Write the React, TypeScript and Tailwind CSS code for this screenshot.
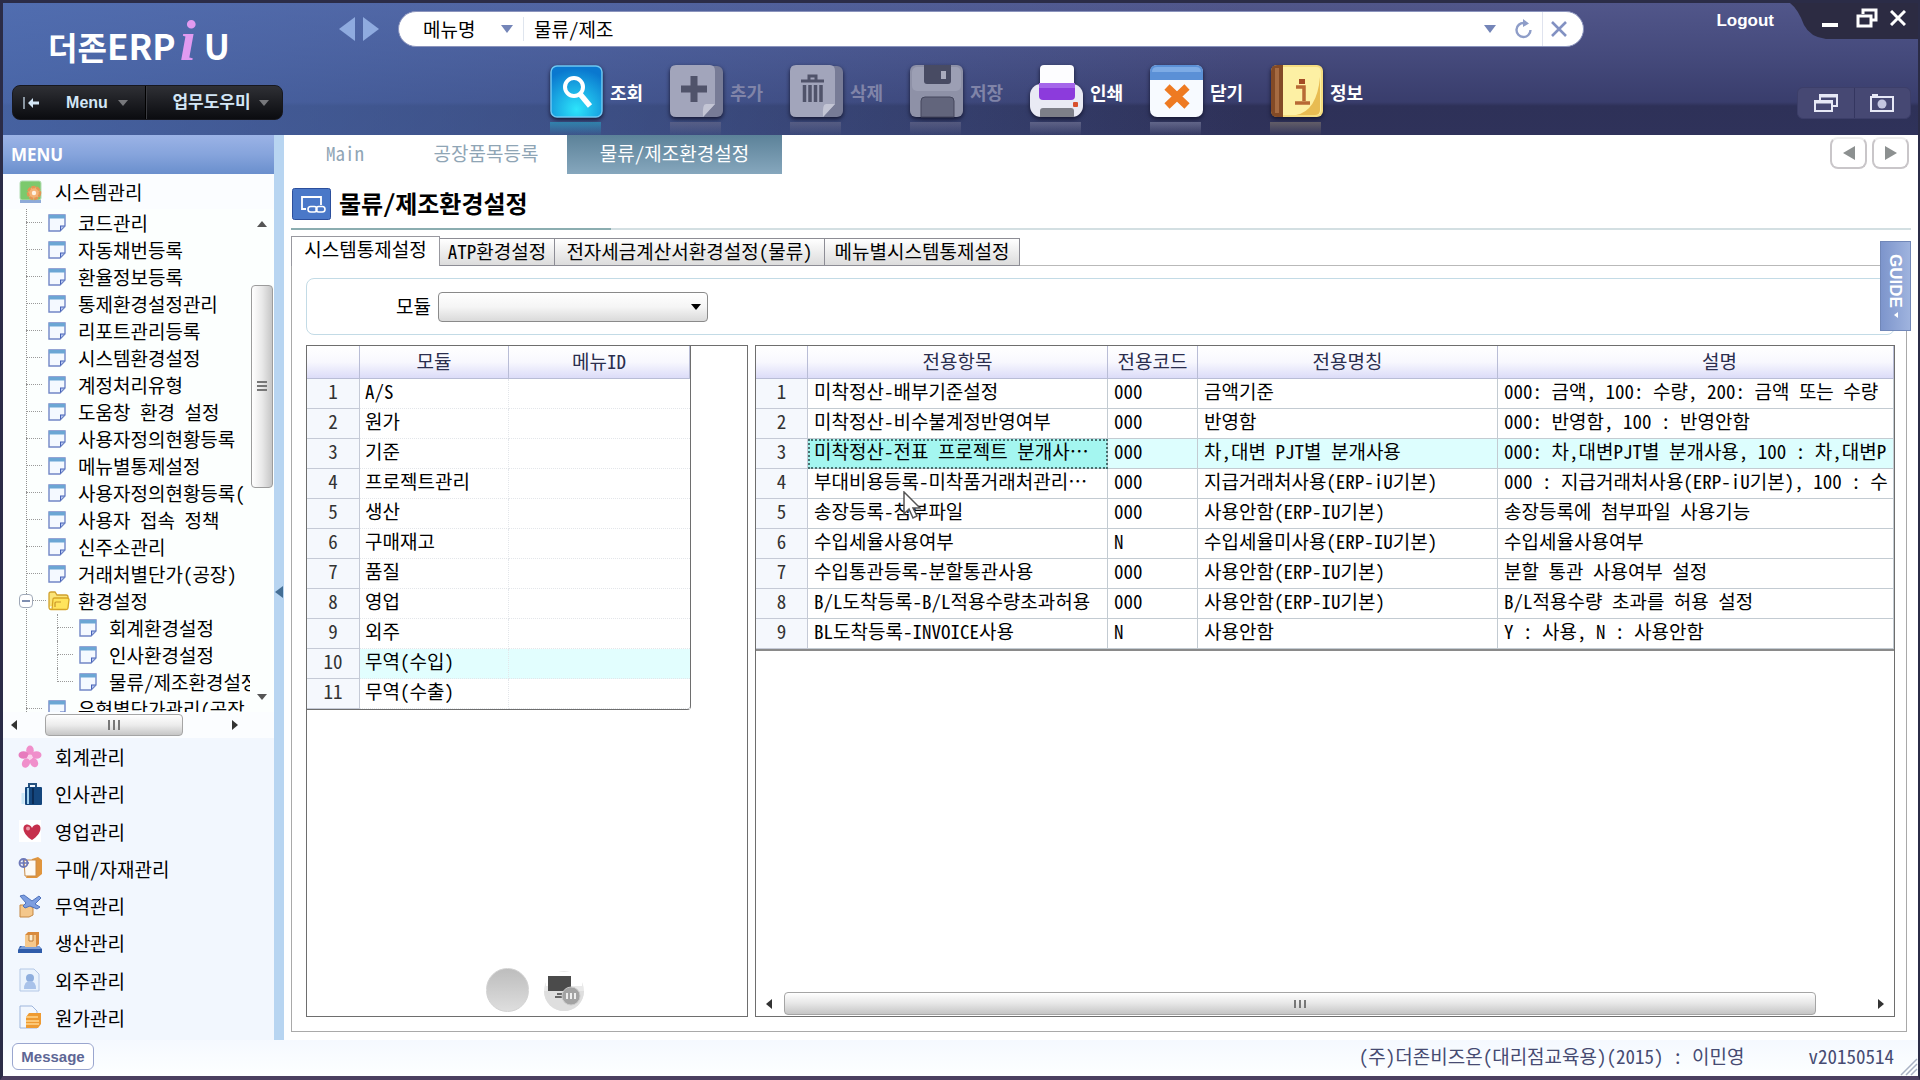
import type { ReactNode } from 'react'

const MONO = "font-['Noto_Sans_Mono_CJK_KR','Noto_Sans_CJK_KR',monospace]"
const SANS = "font-['Liberation_Sans','Noto_Sans_CJK_KR',sans-serif]"

interface TreeItem {
  label: string
  depth?: number
  folder?: boolean
}

const treeItems: TreeItem[] = [
  { label: '코드관리' },
  { label: '자동채번등록' },
  { label: '환율정보등록' },
  { label: '통제환경설정관리' },
  { label: '리포트관리등록' },
  { label: '시스템환경설정' },
  { label: '계정처리유형' },
  { label: '도움창 환경 설정' },
  { label: '사용자정의현황등록' },
  { label: '메뉴별통제설정' },
  { label: '사용자정의현황등록(' },
  { label: '사용자 접속 정책' },
  { label: '신주소관리' },
  { label: '거래처별단가(공장)' },
  { label: '환경설정', folder: true },
  { label: '회계환경설정', depth: 1 },
  { label: '인사환경설정', depth: 1 },
  { label: '물류/제조환경설정', depth: 1 },
  { label: '유형별단가관리(공장' },
]

const modules = ['A/S', '원가', '기준', '프로젝트관리', '생산', '구매재고', '품질', '영업', '외주', '무역(수입)', '무역(수출)']

// 전용항목, 전용코드, 전용명칭, 설명
const settings = [
  ['미착정산-배부기준설정', '000', '금액기준', '000: 금액, 100: 수량, 200: 금액 또는 수량'],
  ['미착정산-비수불계정반영여부', '000', '반영함', '000: 반영함, 100 : 반영안함'],
  ['미착정산-전표 프로젝트 분개사…', '000', '차,대변 PJT별 분개사용', '000: 차,대변PJT별 분개사용, 100 : 차,대변P'],
  ['부대비용등록-미착품거래처관리…', '000', '지급거래처사용(ERP-iU기본)', '000 : 지급거래처사용(ERP-iU기본), 100 : 수'],
  ['송장등록-첨부파일', '000', '사용안함(ERP-IU기본)', '송장등록에 첨부파일 사용기능'],
  ['수입세율사용여부', 'N', '수입세율미사용(ERP-IU기본)', '수입세율사용여부'],
  ['수입통관등록-분할통관사용', '000', '사용안함(ERP-IU기본)', '분할 통관 사용여부 설정'],
  ['B/L도착등록-B/L적용수량초과허용', '000', '사용안함(ERP-IU기본)', 'B/L적용수량 초과를 허용 설정'],
  ['BL도착등록-INVOICE사용', 'N', '사용안함', 'Y : 사용, N : 사용안함'],
]

function Arrow({ dir, className }: { dir: 'left' | 'right' | 'up' | 'down'; className: string }) {
  const points = {
    left: '10,0 10,10 0,5',
    right: '0,0 10,5 0,10',
    up: '0,10 5,0 10,10',
    down: '0,0 10,0 5,10',
  }[dir]
  return (
    <svg viewBox="0 0 10 10" preserveAspectRatio="none" className={`shrink-0 fill-current ${className}`}>
      <polygon points={points} />
    </svg>
  )
}

function DocIcon() {
  return (
    <svg viewBox="0 0 18 18" className="w-[18px] h-[18px] shrink-0">
      <path d="M1 1h16v11l-5 5H1z" fill="#f4f9ff" stroke="#7187c6" strokeWidth="1.4" />
      <path d="M1 1h16v3.5H1z" fill="#6ba6d4" />
      <path d="M17 11.5h-5V17z" fill="#4763b8" />
      <path d="M13 12.5h3l-3 3z" fill="#b9c9ef" />
    </svg>
  )
}

function FolderIcon() {
  return (
    <svg viewBox="0 0 22 20" className="w-[22px] h-5 shrink-0">
      <path d="M1 16V3q0-2 2-2h4l2 3h9q2 0 2 2v3" fill="#fbe476" stroke="#d0a02c" strokeWidth="1.3" />
      <path d="M4 18.500 5 8q0-1 1.500-1H19q2 0 2 1.500l-1 8.500q0 1.500-2 1.500H3Q1 18.500 1 16" fill="#ffe45c" stroke="#d6a526" strokeWidth="1.3" />
      <path d="M7 16v-4q0-1 1-1h5" fill="none" stroke="#c9952a" strokeWidth="1.2" />
    </svg>
  )
}

const categories: { label: string; icon: ReactNode }[] = [
  {
    label: '회계관리',
    icon: (
      <g fill="#f08fcb">
        <ellipse cx="12" cy="5.500" rx="3.800" ry="5" />
        <ellipse cx="18.500" cy="10" rx="5" ry="3.800" />
        <ellipse cx="16" cy="17.500" rx="3.800" ry="5" transform="rotate(-35 16 17.500)" />
        <ellipse cx="8" cy="18" rx="3.800" ry="5" transform="rotate(30 8 18)" />
        <ellipse cx="5.500" cy="10" rx="5" ry="3.800" fill="#e77bbd" />
        <circle cx="12" cy="12" r="2.500" fill="#fbd3ec" />
      </g>
    ),
  },
  {
    label: '인사관리',
    icon: (
      <g>
        <path d="M11 5V2h7v3" fill="none" stroke="#27527f" strokeWidth="2" />
        <rect x="7" y="5" width="17" height="18" rx="1" fill="#14467d" />
        <path d="M10 6v16" stroke="#9fd0ee" strokeWidth="2" />
        <path d="M15 6v16" stroke="#0b2c56" strokeWidth="2" />
        <path d="M5 11v11" stroke="#cbe8f8" strokeWidth="3" />
      </g>
    ),
  },
  {
    label: '영업관리',
    icon: (
      <g>
        <rect x="1" y="1" width="22" height="22" fill="#fff" />
        <path d="M14 21C3 14 4 5 9.500 5.500Q13 6 14 9q1-3 4.500-3.500C24 5 25 14 14 21z" fill="#c52f4b" />
        <circle cx="10" cy="9.500" r="2" fill="#ec94a3" />
      </g>
    ),
  },
  {
    label: '구매/자재관리',
    icon: (
      <g>
        <path d="M14 3l6-2 4 3v14l-5 4H8z" fill="#e0953d" />
        <path d="M6 4h12v16H7z" fill="#fdfaf4" stroke="#c98c48" />
        <circle cx="5.500" cy="7" r="4" fill="none" stroke="#6d78b8" strokeWidth="1.800" />
        <path d="M2 7h9M5.500 3v8" stroke="#6d78b8" strokeWidth="1.500" />
      </g>
    ),
  },
  {
    label: '무역관리',
    icon: (
      <g>
        <path d="M2 11h9l4 3v7l-4 2H2z" fill="#f4c78b" stroke="#c48743" />
        <path d="M2 2l4-1 8 6 7-5 2 2-6 6 5 3-3 2-7-3-5 2-2-2 3-3z" fill="#7d9ee0" stroke="#4f73bd" />
      </g>
    ),
  },
  {
    label: '생산관리',
    icon: (
      <g>
        <path d="M2 15h19l3 3v4H0v-3z" fill="#2f5caa" />
        <path d="M4 15h17l2 3H1z" fill="#7c9fd8" />
        <path d="M7 4l3-3h11v12l-3 3H7z" fill="#d98b3d" />
        <path d="M7 4h11v12H7z" fill="#f6c98c" />
        <path d="M11 4v6h4V4" fill="#fdf0d5" stroke="#bc7a34" />
      </g>
    ),
  },
  {
    label: '외주관리',
    icon: (
      <g>
        <path d="M2 1h14l5 5v17H2z" fill="#eaf3fd" stroke="#b4c8e6" />
        <circle cx="12" cy="10" r="4" fill="#8eaede" />
        <path d="M6 21q0-8 6-8t6 8z" fill="#a9c3ea" />
      </g>
    ),
  },
  {
    label: '원가관리',
    icon: (
      <g>
        <path d="M2 1h12l5 5v17H2z" fill="#f2f7fe" stroke="#9fb6dc" />
        <path d="M8 12l3-4h12v11l-3 4H8z" fill="#ee9b33" />
        <path d="M8 12h12M8 16h13M8 19h13" stroke="#ffd68f" strokeWidth="1.300" />
      </g>
    ),
  },
]

interface Tool {
  label: string
  off?: boolean
  glow: string
  icon: ReactNode
}

const tools: Tool[] = [
  {
    label: '조회',
    glow: 'from-[#2aa5c8]',
    icon: (
      <g>
        <defs>
          <radialGradient id="search" cx="50%" cy="85%" r="80%">
            <stop offset="0" stopColor="#2ce4fb" />
            <stop offset="1" stopColor="#0a78cf" />
          </radialGradient>
        </defs>
        <rect x="1" y="1" width="51" height="51" rx="6" fill="url(#search)" stroke="#6ec8f4" strokeWidth="1.500" />
        <circle cx="24" cy="22" r="9" fill="none" stroke="#fff" strokeWidth="4" />
        <path d="M30 29l10 12" stroke="#fff" strokeWidth="5.500" />
      </g>
    ),
  },
  {
    label: '추가',
    off: true,
    glow: 'from-[#6a6c8c]',
    icon: (
      <g>
        <rect x="6" y="1" width="47" height="51" rx="6" fill="#777b96" />
        <path d="M6 0h34q5 0 5 6v33L33 52H6q-6 0-6-6V6q0-6 6-6z" fill="#a2a5bb" />
        <path d="M45 39H36q-4 0-3 13z" fill="#c3c5d4" />
        <path d="M24 11v26M11 24h26" stroke="#50536a" strokeWidth="7" />
      </g>
    ),
  },
  {
    label: '삭제',
    off: true,
    glow: 'from-[#6a6c8c]',
    icon: (
      <g>
        <rect x="6" y="1" width="47" height="51" rx="6" fill="#777b96" />
        <path d="M6 0h34q5 0 5 6v33L33 52H6q-6 0-6-6V6q0-6 6-6z" fill="#a2a5bb" />
        <path d="M45 39H36q-4 0-3 13z" fill="#c3c5d4" />
        <path d="M11 16h23M19 15v-4h7v4" fill="none" stroke="#50536a" strokeWidth="3" />
        <path d="M14.500 20v17M20 20v17M25.500 20v17M31 20v17" stroke="#50536a" strokeWidth="3.500" />
      </g>
    ),
  },
  {
    label: '저장',
    off: true,
    glow: 'from-[#6a6c8c]',
    icon: (
      <g>
        <rect x="0" y="0" width="53" height="52" rx="6" fill="#8e91a7" />
        <rect x="2" y="2" width="49" height="24" rx="5" fill="#9c9fb4" />
        <path d="M14 0h27v16q0 3-3 3H17q-3 0-3-3z" fill="#484b63" />
        <rect x="31" y="6" width="5" height="8" fill="#a9abbd" />
        <path d="M11 52V36q0-4 4-4h25q4 0 4 4v16z" fill="#62657c" stroke="#44475d" />
      </g>
    ),
  },
  {
    label: '인쇄',
    glow: 'from-[#7b7d9c]',
    icon: (
      <g>
        <rect x="0" y="19" width="53" height="33" rx="11" fill="#e9eaf4" />
        <rect x="10" y="0" width="34" height="26" rx="4" fill="#fdfdff" />
        <path d="M9 18h36v13q0 4-4 4H13q-4 0-4-4z" fill="#8c3bdc" />
        <path d="M9 18h36v5H9z" fill="#a566ea" />
        <rect x="43" y="37" width="5" height="5" rx="1" fill="#d8502e" />
        <path d="M10 52v-6q0-3 3-3h28q3 0 3 3v6z" fill="#7d7f88" />
      </g>
    ),
  },
  {
    label: '닫기',
    glow: 'from-[#8387a6]',
    icon: (
      <g>
        <rect x="0" y="0" width="53" height="52" rx="7" fill="#f7faff" />
        <path d="M0 15V7q0-7 7-7h39q7 0 7 7v8z" fill="#5b90d6" />
        <path d="M2 7q0-5 5-5h39q5 0 5 5z" fill="#7dabe5" />
        <path d="M17 22l20 19M37 22L17 41" stroke="#ee7a22" strokeWidth="7.500" />
      </g>
    ),
  },
  {
    label: '정보',
    glow: 'from-[#857b72]',
    icon: (
      <g>
        <rect x="1" y="0" width="52" height="52" rx="6" fill="#f6dd80" />
        <path d="M13 2h33q5 0 5 5v38q0 5-5 5H13z" fill="#fdf0a4" />
        <path d="M50 12v33q0 5-5 5H26Q47 46 50 12z" fill="#e8bc52" />
        <path d="M7 0h6v52H7q-6 0-6-6V6q0-6 6-6z" fill="#834a26" />
        <path d="M7 3v45" stroke="#a66b42" strokeWidth="4" />
        <rect x="29" y="14" width="6" height="5" fill="#a44b25" />
        <path d="M26 22h8v14M25 38h15" fill="none" stroke="#b86a35" strokeWidth="3.500" />
      </g>
    ),
  },
]

function Header() {
  return (
    <header className="relative shrink-0 h-[132px] flex overflow-hidden bg-[linear-gradient(90deg,#5077c0b0_0,#5077c070_30%,#5077c000_65%),linear-gradient(180deg,#51568a_0,#454a7c_40%,#393d6c_75%,#2e3158_78%,#2f325a_100%)]">
      <div className={`w-[330px] shrink-0 pl-[9px] ${SANS}`}>
        <h1 className="flex items-baseline pl-9 h-[82px] pt-2 text-white font-bold text-[34px] leading-[60px]">
          <span className="font-['Noto_Sans_CJK_KR',sans-serif] text-[32px]">더존</span>
          <span className="font-['Noto_Sans_CJK_KR',sans-serif] text-[35px]">ERP</span>
          <span className="px-1 font-['Liberation_Serif',serif] italic text-[58px] text-[#e19af0]">i</span>
          <span className="font-['Noto_Sans_CJK_KR',sans-serif] text-[35px] pl-1">U</span>
        </h1>
        <div className="flex w-[271px] h-[35px] rounded-lg border border-[#17181f] bg-gradient-to-b from-[#2f3035] to-[#0b0c10] text-[#d3e6f6] font-bold text-base">
          <button type="button" aria-label="접기" className="w-9 flex items-center justify-center">
            <svg viewBox="0 0 16 14" className="w-4 h-3.5">
              <path d="M1 1v12" stroke="#d3e6f6" strokeWidth="1.200" />
              <path d="M5 7l5-5v3.500h6v3h-6V12z" fill="#d3e6f6" />
            </svg>
          </button>
          <button type="button" className="flex-1 flex items-center justify-center gap-2.5 border-r border-black">
            Menu
            <Arrow dir="down" className="w-2.5 h-1.5 text-[#77787c]" />
          </button>
          <button type="button" className="w-[136px] flex items-center justify-center gap-2 border-l border-[#3a3b40] pl-3 text-[17px]">
            업무도우미
            <Arrow dir="down" className="w-2.5 h-1.5 text-[#77787c]" />
          </button>
        </div>
      </div>

      <div className="flex-1 min-w-0 pt-2">
        <div className="flex items-center">
          <div className="w-[65px] shrink-0 flex gap-2 pl-1.5 text-[#8fabdf]">
            <button type="button" aria-label="이전"><Arrow dir="left" className="w-4 h-6" /></button>
            <button type="button" aria-label="다음"><Arrow dir="right" className="w-4 h-6" /></button>
          </div>
          <div className={`flex-1 h-9 flex items-center rounded-full bg-white border border-[#8b94bd] px-5 ${MONO} text-[19px] text-black`}>
            <label className="relative flex items-center w-[104px]">
              <select aria-label="검색 구분" className="w-full appearance-none bg-transparent outline-none pl-1">
                <option>메뉴명</option>
              </select>
              <Arrow dir="down" className="absolute right-2.5 w-3 h-2 text-[#7485b8] pointer-events-none" />
            </label>
            <input aria-label="메뉴 검색" defaultValue="물류/제조" className="flex-1 min-w-0 h-6 border-l border-[#dfe5ee] pl-2.5 bg-transparent outline-none" />
            <button type="button" aria-label="목록" className="px-3 text-[#7485b8]"><Arrow dir="down" className="w-3 h-2" /></button>
            <button type="button" aria-label="새로고침" className="px-1.5">
              <svg viewBox="0 0 18 20" className="w-[18px] h-5">
                <path d="M10 4a7 7 0 1 0 6.500 7" fill="none" stroke="#8e9dc8" strokeWidth="2.400" />
                <path d="M9 0l6 4.500L9 8z" fill="#8e9dc8" />
              </svg>
            </button>
            <button type="button" aria-label="지우기" className="h-[34px] border-l border-[#dfe3ee] pl-2 -mr-1 ml-1">
              <svg viewBox="0 0 16 16" className="w-4 h-4">
                <path d="M1 1l14 14M15 1L1 15" stroke="#8291c2" strokeWidth="2.600" />
              </svg>
            </button>
          </div>
        </div>

        <div className={`flex pl-[217px] pt-[18px] ${SANS}`}>
          {tools.map(tool => (
            <button
              key={tool.label}
              type="button"
              disabled={tool.off}
              className={`w-[120px] h-[72px] flex items-start gap-1.5 font-bold text-lg text-left ${tool.off ? 'text-[#8084a8]' : 'text-white'}`}
            >
              <span className="block w-[54px] shrink-0">
                <svg viewBox="0 0 53 53" className="w-[53px] h-[53px] drop-shadow-[0_2px_2px_#141631]">{tool.icon}</svg>
                <span className={`block mt-1 w-[51px] h-3.5 bg-gradient-to-b ${tool.glow} to-transparent opacity-60`} />
              </span>
              <span className="leading-[58px]">{tool.label}</span>
            </button>
          ))}
        </div>
      </div>

      <div className="w-[334px] shrink-0 flex flex-col items-end justify-between pb-4 pr-[7px]">
        <div className="w-full flex justify-end items-start">
          <a href="#logout" className={`pt-2 pr-4 text-white font-bold text-[17px] leading-5 ${SANS}`}>Logout</a>
          <div className="relative w-[128px] h-9 -mr-[7px] flex items-center justify-end gap-3 pr-3 pb-1.5">
            <svg viewBox="0 0 128 36" preserveAspectRatio="none" className="absolute inset-0 w-full h-full">
              <path d="M0 0h128v36H36Q20 34 14 22 8 6 0 0z" fill="#2c2b42" />
            </svg>
            <button type="button" aria-label="최소화" className="relative mr-1.5">
              <svg viewBox="0 0 16 20" className="w-4 h-5"><path d="M0 17h16" stroke="#fff" strokeWidth="4" /></svg>
            </button>
            <button type="button" aria-label="창 크기" className="relative">
              <svg viewBox="0 0 22 20" className="w-[22px] h-5" fill="none" stroke="#fff" strokeWidth="3">
                <path d="M7 6V2h13v10h-4" />
                <rect x="2" y="8" width="13" height="10" />
              </svg>
            </button>
            <button type="button" aria-label="닫기" className="relative">
              <svg viewBox="0 0 16 16" className="w-4 h-4"><path d="M1 1l14 14M15 1L1 15" stroke="#fff" strokeWidth="3" /></svg>
            </button>
          </div>
        </div>
        <div className="flex w-[114px] h-8 rounded-md bg-[#464873] border border-[#3c3e69]">
          <button type="button" aria-label="창 정렬" className="flex-1 flex items-center justify-center border-r border-[#343660]">
            <svg viewBox="0 0 24 18" className="w-6 h-[18px]" fill="none" stroke="#e6e8f6" strokeWidth="2">
              <path d="M6 6V1h17v11h-4" />
              <path d="M6 2h17" strokeWidth="3" />
              <rect x="1" y="7" width="17" height="10" />
              <path d="M1 8h17" strokeWidth="3" />
            </svg>
          </button>
          <button type="button" aria-label="화면 캡처" className="flex-1 flex items-center justify-center">
            <svg viewBox="0 0 24 18" className="w-6 h-[18px]">
              <path d="M1 3h22v14H1z" fill="none" stroke="#e6e8f6" strokeWidth="2" />
              <path d="M2 1h6" stroke="#e6e8f6" strokeWidth="2" />
              <circle cx="12" cy="10" r="4.500" fill="#c3c6e0" />
            </svg>
          </button>
        </div>
      </div>
    </header>
  )
}

function TreeRow({ item }: { item: TreeItem }) {
  return (
    <li className={`relative h-[27px] flex items-center whitespace-nowrap ${item.depth ? 'pl-[54px]' : 'pl-[23px]'}`}>
      {item.folder && (
        <button type="button" aria-label="접기" className="absolute left-4 w-3.5 h-3.5 bg-white border border-[#9fa9b8] rounded-sm flex items-center justify-center">
          <span className="w-2 h-0.5 bg-[#7f8fb0]" />
        </button>
      )}
      {item.depth && <span className="absolute left-[54px] top-0 h-3.5 border-l border-dotted border-[#9a9a9a]" />}
      {item.depth && item.label !== '물류/제조환경설정' && (
        <span className="absolute left-[54px] top-3.5 bottom-0 border-l border-dotted border-[#9a9a9a]" />
      )}
      <span className={`w-4 shrink-0 border-t border-dotted border-[#9a9a9a] ${item.folder ? 'ml-1 -mr-1' : ''}`} />
      <a href="#menu" className="flex shrink-0 items-center pl-1.5">
        <span className="flex shrink-0 w-[30px]">{item.folder ? <FolderIcon /> : <DocIcon />}</span>
        {item.label}
      </a>
    </li>
  )
}

function Sidebar() {
  return (
    <nav className={`w-[271px] shrink-0 flex flex-col text-black text-[19px] leading-none ${MONO}`}>
      <h2 className="h-[39px] shrink-0 flex items-center px-2 bg-gradient-to-b from-[#9bb3e6] via-[#86a4dc] to-[#6a8fcd] text-white font-bold text-[17px] font-['Open_Sans',sans-serif]">
        MENU
      </h2>
      <a href="#system" className="h-[35px] shrink-0 flex items-center gap-3 pl-4">
        <svg viewBox="0 0 24 24" className="w-6 h-6">
          <rect x="1" y="1" width="21" height="19" rx="2" fill="#7cc96c" stroke="#b3dcb4" />
          <path d="M1 20h21v3H1z" fill="#8eaad8" />
          <circle cx="15" cy="13" r="6" fill="#f4b275" stroke="#e39653" strokeWidth="2.500" strokeDasharray="4 1" />
          <circle cx="15" cy="13" r="2.200" fill="#fdf2e5" />
        </svg>
        시스템관리
      </a>
      <div className="flex-1 min-h-0 flex bg-[#fcfffe]">
        <div className="relative flex-1 overflow-hidden">
          <ul className="absolute inset-x-0 top-0">
            <li aria-hidden="true" className="absolute left-[23px] top-0 bottom-0 border-l border-dotted border-[#8f8f8f]" />
            {treeItems.map(item => <TreeRow key={item.label} item={item} />)}
          </ul>
        </div>
        <div className="w-6 shrink-0 flex flex-col items-center py-3">
          <Arrow dir="up" className="w-2.5 h-1.5 text-[#555]" />
          <div className="flex-[58]" />
          <div className="flex-[203] w-[22px] border border-[#9c9c9c] rounded-sm bg-gradient-to-r from-white via-[#e9e9e9] to-[#c6c6c6] flex flex-col items-center justify-center gap-0.5">
            <span className="w-2.5 h-0.5 bg-[#777]" />
            <span className="w-2.5 h-0.5 bg-[#777]" />
            <span className="w-2.5 h-0.5 bg-[#777]" />
          </div>
          <div className="flex-[208]" />
          <Arrow dir="down" className="w-2.5 h-1.5 text-[#555]" />
        </div>
      </div>
      <div className="h-[26px] shrink-0 flex items-center pl-2 pr-9">
        <Arrow dir="left" className="w-1.5 h-2.5 text-[#333]" />
        <div className="ml-7 w-[138px] h-[22px] border border-[#a5a5a5] rounded-sm bg-gradient-to-b from-white via-[#ececec] to-[#c6c6c6] flex items-center justify-center gap-[3px]">
          <span className="w-0.5 h-2.5 bg-[#777]" />
          <span className="w-0.5 h-2.5 bg-[#777]" />
          <span className="w-0.5 h-2.5 bg-[#777]" />
        </div>
        <div className="flex-1" />
        <Arrow dir="right" className="w-1.5 h-2.5 text-[#333]" />
      </div>
      <ul className="h-[302px] shrink-0 grid grid-rows-8 bg-[#f2f7fe] pb-1">
        {categories.map(({ label, icon }) => (
          <li key={label} className="flex">
            <a href="#category" className="flex items-center gap-3 pl-[15px]">
              <svg viewBox="0 0 25 24" className="w-[25px] h-6">{icon}</svg>
              {label}
            </a>
          </li>
        ))}
      </ul>
    </nav>
  )
}

const headCell = 'h-[33px] pb-1 font-normal text-[#2b2e4e] border-r border-b border-[#b9bdd6] bg-gradient-to-b from-white via-[#f8f8fe] to-[#dcdcf8]'
const numCell = 'pb-1.5 text-center text-[#333] bg-[#f5f8fd] border-r border-b border-[#c5cad6]'

function ModuleGrid() {
  return (
    <section className="relative w-[442px] shrink-0 border border-[#6e6e6e]">
      <table className="table-fixed border-separate border-spacing-0 w-[384px] border-r border-b border-[#6e6e6e] rounded-br-sm">
        <colgroup>
          <col className="w-[53px]" />
          <col className="w-[149px]" />
          <col />
        </colgroup>
        <thead>
          <tr>
            <th className={headCell} />
            <th className={headCell}>모듈</th>
            <th className={headCell}>메뉴ID</th>
          </tr>
        </thead>
        <tbody>
          {modules.map((name, i) => (
            <tr key={name} className={name === '무역(수입)' ? 'bg-[#e2fefe]' : ''}>
              <td className={`h-[30px] ${numCell}`}>{i + 1}</td>
              <td className="pl-[5px] pb-1.5 border-r border-b border-dotted border-[#e3e6ea]">{name}</td>
              <td className="border-b border-dotted border-[#e3e6ea]" />
            </tr>
          ))}
        </tbody>
      </table>
      {/* Floating round buttons */}
      <div className="absolute bottom-1 left-[179px] flex gap-3.5">
        <button type="button" aria-label="녹화" className="w-[43px] h-[44px] rounded-full bg-gradient-to-b from-[#bdbdbd] to-[#dedede] border border-[#d2d2d2]" />
        <button type="button" aria-label="화면 공유">
          <svg viewBox="0 0 42 44" className="w-[42px] h-11">
            <circle cx="21" cy="23" r="20" fill="#e9e9e9" />
            <path d="M3 4h36v14H3z" fill="#fff" />
            <path d="M1 23a20 20 0 0 0 40 0z" fill="#dedede" />
            <path d="M5 8h23v15H5z" fill="#4b4b4b" />
            <path d="M12 29h8M14 26h6" stroke="#666" strokeWidth="2" />
            <circle cx="28" cy="28" r="9" fill="#a3a3a3" stroke="#c9c9c9" />
            <path d="M24 25v6M28 25v6M32 25v6" stroke="#eee" strokeWidth="2" />
          </svg>
        </button>
      </div>
    </section>
  )
}

function SettingGrid() {
  return (
    <section className="relative flex-1 min-w-0 flex flex-col border border-[#6e6e6e]">
      <table className="table-fixed border-separate border-spacing-0 w-full border-b-2 border-[#8a8a8a]">
        <colgroup>
          <col className="w-[52px]" />
          <col className="w-[300px]" />
          <col className="w-[90px]" />
          <col className="w-[300px]" />
          <col />
        </colgroup>
        <thead>
          <tr>
            <th className={headCell} />
            <th className={headCell}>전용항목</th>
            <th className={headCell}>전용코드</th>
            <th className={headCell}>전용명칭</th>
            <th className={`${headCell} pl-12`}>설명</th>
          </tr>
        </thead>
        <tbody>
          {settings.map((row, i) => (
            <tr key={row[0]} className={i === 2 ? 'bg-[#ddfefe]' : ''}>
              <td className={`h-[30px] ${numCell}`}>{i + 1}</td>
              {row.map((cell, c) => (
                <td
                  key={c}
                  className={`pl-1.5 pb-1.5 leading-[23px] border-r border-b border-[#c3cbd2] whitespace-nowrap ${
                    i === 2 && c === 0 ? 'bg-[#a4f6f0] outline-2 -outline-offset-2 outline-dotted outline-[#47706f]' : ''
                  }`}
                >
                  {cell}
                </td>
              ))}
            </tr>
          ))}
        </tbody>
      </table>
      <div className="mt-auto h-[25px] flex items-center pl-2.5 pr-2.5">
        <Arrow dir="left" className="w-1.5 h-2.5 text-[#333]" />
        <div className="ml-3 mr-2 flex-1">
          <div className="w-[95%] h-[23px] border border-[#a5a5a5] rounded-sm bg-gradient-to-b from-white via-[#e6e6e6] to-[#c6c6c6] flex items-center justify-center gap-[3px]">
            <span className="w-0.5 h-2 bg-[#777]" />
            <span className="w-0.5 h-2 bg-[#777]" />
            <span className="w-0.5 h-2 bg-[#777]" />
          </div>
        </div>
        <Arrow dir="right" className="w-1.5 h-2.5 text-[#333]" />
      </div>
      {/* Mouse pointer */}
      <svg viewBox="0 0 18 30" className="absolute left-[147px] top-[145px] w-[18px] h-[30px]">
        <path d="M1 1v22l5-5 4 9 4-2-4-8h7z" fill="#fff" stroke="#555" strokeWidth="1.500" />
      </svg>
    </section>
  )
}

const innerTab = 'h-[28px] pb-1 border border-l-0 border-[#8d8d95] bg-gradient-to-b from-white to-[#dcdcdc] whitespace-nowrap'

function Content() {
  return (
    <main className={`relative flex-1 min-w-0 flex flex-col bg-white text-black text-[19px] leading-none pl-[7px] pr-[7px] pb-2 ${MONO}`}>
      <div className="h-[39px] shrink-0 flex text-[#8fa5b5]">
        <button type="button" className="w-[108px] pb-1">Main</button>
        <button type="button" className="w-[168px] pb-1 pl-1.5">공장품목등록</button>
        <button type="button" className="w-[215px] pb-1 bg-gradient-to-b from-[#5c8299] to-[#86a7bd] text-white">물류/제조환경설정</button>
        <div className="ml-auto mr-0.5 flex gap-[5px] pt-0.5 text-[#8c9090]">
          <button type="button" aria-label="이전 탭" className="w-[37px] h-[32px] flex items-center justify-center rounded-lg border-2 border-t-[#eee] border-[#c9c6c9]">
            <Arrow dir="left" className="w-3 h-3.5" />
          </button>
          <button type="button" aria-label="다음 탭" className="w-[37px] h-[32px] flex items-center justify-center rounded-lg border-2 border-t-[#eee] border-[#c9c6c9]">
            <Arrow dir="right" className="w-3 h-3.5" />
          </button>
        </div>
      </div>

      <div className="h-[54px] shrink-0 flex items-center gap-2 pt-1.5 pl-px">
        <svg viewBox="0 0 39 32" className="w-[39px] h-8">
          <rect x="0.500" y="0.500" width="38" height="31" rx="2" fill="#4a78c8" stroke="#2c4f9c" />
          <path d="M14 21h-4V9h19v8" fill="none" stroke="#fff" strokeWidth="1.800" />
          <rect x="16" y="18.500" width="9" height="5.500" rx="2.700" fill="none" stroke="#fff" strokeWidth="1.600" />
          <rect x="24" y="18.500" width="9" height="5.500" rx="2.700" fill="none" stroke="#fff" strokeWidth="1.600" />
        </svg>
        <h2 className="font-bold text-2xl leading-none pb-0.5">물류/제조환경설정</h2>
      </div>
      <div className="shrink-0 flex h-0.5">
        <div className="w-[320px] bg-[#8badb0]" />
        <div className="flex-1 bg-[#d3dfe2]" />
      </div>

      <div className="shrink-0 flex items-end mt-1.5">
        <button type="button" className="h-[30px] w-[149px] pb-1.5 border border-b-0 border-[#98989f] bg-white">시스템통제설정</button>
        <button type="button" className={`${innerTab} w-[115px]`}>ATP환경설정</button>
        <button type="button" className={`${innerTab} w-[270px]`}>전자세금계산서환경설정(물류)</button>
        <button type="button" className={`${innerTab} w-[195px]`}>메뉴별시스템통제설정</button>
        <div className="flex-1 border-b border-[#b9b9b9]" />
      </div>

      <div className="flex-1 min-h-0 flex flex-col border border-t-0 border-[#a9a9a9] pl-3.5 pr-[11px] pt-3 pb-3.5 mr-1">
        <div className="h-[57px] shrink-0 flex items-center border border-[#c3dbe6] rounded-lg pl-[89px]">
          <label htmlFor="module" className="w-[42px] pb-0.5">모듈</label>
          <div className="relative flex items-center w-[270px]">
            <select id="module" className="w-full h-[30px] appearance-none rounded border border-[#8a8a8a] bg-gradient-to-b from-white via-[#f5f5f5] to-[#dadada] outline-none">
              <option value="" />
            </select>
            <Arrow dir="down" className="absolute right-[7px] w-2.5 h-1.5 text-black pointer-events-none" />
          </div>
        </div>
        <div className="flex-1 min-h-0 flex gap-[7px] mt-2.5">
          <ModuleGrid />
          <SettingGrid />
        </div>
      </div>

      {/* Guide handle docked on the right edge */}
      <button
        type="button"
        className="absolute right-[7px] top-[106px] w-[31px] h-[90px] flex items-center justify-center gap-1 [writing-mode:vertical-rl] bg-gradient-to-r from-[#7d95cc] to-[#9fb3de] border border-[#7187b8] text-white font-bold text-[17px] font-['Liberation_Sans',sans-serif]"
      >
        GUIDE
        <Arrow dir="left" className="w-1 h-1.5" />
      </button>
    </main>
  )
}

export default function App() {
  return (
    <div className="h-screen min-h-[760px] flex flex-col border-[3px] border-r-2 border-b-4 border-[#2b2c47] border-b-[#4b3f60] bg-[#fbfdff] overflow-hidden">
      <Header />
      <div className="flex-1 min-h-0 flex">
        <Sidebar />
        <div className="w-2.5 shrink-0 bg-[#b8d5f1] flex items-center justify-center pt-2">
          <Arrow dir="left" className="w-2 h-3 text-[#446e94]" />
        </div>
        <Content />
      </div>
      <footer className={`h-9 shrink-0 flex items-center justify-between pl-[9px] bg-gradient-to-b from-[#f5f9ff] to-[#fdffff] text-[19px] leading-none text-[#464b72] ${MONO}`}>
        <button type="button" className={`w-[82px] h-[27px] mb-1 rounded-md border border-[#9aa6cf] bg-white text-[#5e6795] font-bold text-[15px] ${SANS}`}>
          Message
        </button>
        <div className="h-full flex items-center">
          <span className="pb-1.5">(주)더존비즈온(대리점교육용)(2015) : 이민영</span>
          <span className="pl-16 pr-1.5 pb-1.5">v20150514</span>
          <svg viewBox="0 0 18 18" className="w-[18px] h-[18px] self-end">
            <path d="M1 17L17 1M6 17L17 6M11 17l6-6" stroke="#a9b2c4" strokeWidth="1.500" />
          </svg>
        </div>
      </footer>
    </div>
  )
}
